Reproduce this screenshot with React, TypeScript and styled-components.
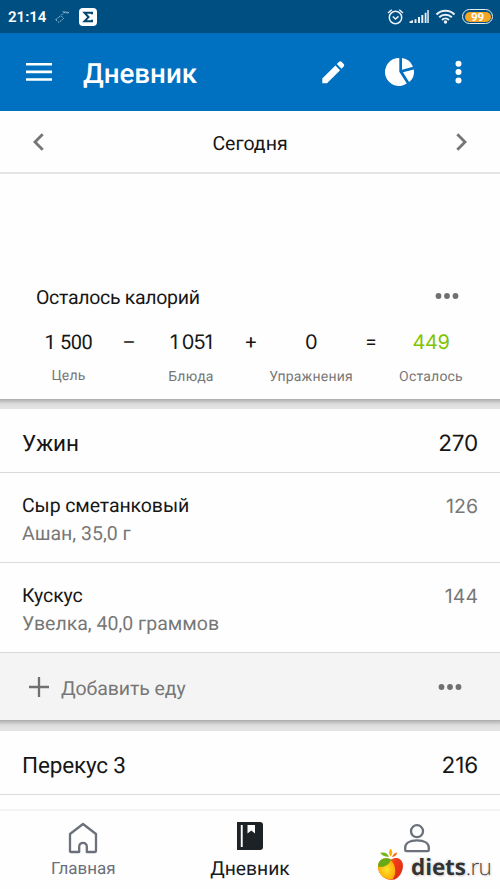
import React from "react";
import styled, { createGlobalStyle } from "styled-components";

const GlobalStyle = createGlobalStyle`
  * { box-sizing: border-box; }
  body { margin: 0; background: #fff; font-family: Roboto, "Noto Sans", sans-serif; text-rendering: geometricPrecision; }
  svg { display: block; flex: none; }
`;

const Screen = styled.div`
  width: 500px;
  height: 889px;
  overflow: hidden;
  display: flex;
  flex-direction: column;
  background: #fefefe;
  color: #161616;
`;

const StatusBar = styled.header`
  height: 33px;
  flex: none;
  display: flex;
  align-items: center;
  padding: 0 7px 0 8px;
  background: #004f82;
  color: #fff;
`;

const Clock = styled.span`
  width: 46px;
  font-size: 15px;
  font-weight: 600;
  line-height: 33px;
  padding-top: 1px;
`;

const Spacer = styled.div`
  flex: 1;
`;

const Battery = styled.div`
  width: 31px;
  height: 15px;
  margin-left: 6px;
  border: 1.5px solid #e6eef3;
  border-radius: 8px;
  padding: 1.5px;
  display: flex;
`;

const Charge = styled.span`
  flex: 1;
  border-radius: 5px;
  background: #f5a623;
  color: #fff;
  font: 700 11.5px/10px Roboto, sans-serif;
  text-align: center;
`;

const AppBar = styled.div`
  height: 78px;
  flex: none;
  display: flex;
  align-items: center;
  padding: 0 36px 0 26px;
  background: #0070c0;
  color: #fff;
`;

const Title = styled.h1`
  margin: 3px 0 0 31px;
  font-size: 27.7px;
  line-height: 32px;
  font-weight: 500;
`;

const DateBar = styled.div`
  height: 63px;
  flex: none;
  display: flex;
  align-items: center;
  justify-content: space-between;
  padding: 0 33px;
  border-bottom: 2px solid #e5e5e5;
  font-size: 19.5px;
`;

const DateLabel = styled.span`
  padding-top: 4px;
`;

const Summary = styled.section`
  height: 225px;
  flex: none;
  padding: 110px 0 0;
`;

const SummaryHead = styled.div`
  display: flex;
  justify-content: space-between;
  align-items: center;
  height: 26px;
  padding: 0 41px 0 36px;
  font-size: 19.5px;
  letter-spacing: -0.3px;

  svg { margin-top: -2px; }
`;

const Equation = styled.div`
  display: grid;
  grid-template-columns: 87px 34px 90px 30px 90px 30px 90px;
  padding: 19px 0 0 25px;
`;

const Term = styled.div`
  display: flex;
  flex-direction: column;
  align-items: center;
  white-space: nowrap;
`;

const Amount = styled.span<{ $plain?: boolean; $green?: boolean; $tight?: boolean }>`
  font: 400 20px/26px ${(p) => (p.$plain ? "Roboto" : "Inter")}, sans-serif;
  letter-spacing: ${(p) => (p.$tight ? "-0.9px" : "-0.4px")};
  color: ${(p) => (p.$green ? "#7fc400" : "#161616")};
`;

const Operator = styled.span`
  font-size: 20px;
  line-height: 26px;
  text-align: center;
`;

const Caption = styled.span<{ $raised?: boolean }>`
  margin-top: ${(p) => (p.$raised ? "12px" : "13px")};
  font-size: 14px;
  line-height: 18px;
  letter-spacing: 0.2px;
  color: #777;
`;

const Gap = styled.div<{ $height: number }>`
  height: ${(p) => p.$height}px;
  flex: none;
  background: linear-gradient(#aaa 0, #c0c0c0 2px, #dcdcdc 5px, #e3e3e3 8px);
`;

const MealHead = styled.div`
  height: 64px;
  flex: none;
  display: flex;
  align-items: center;
  justify-content: space-between;
  padding: 7px 22px 0;
  border-bottom: 1px solid #dadada;
  font-size: 22.5px;
  letter-spacing: -0.15px;
  line-height: 30px;
`;

const MealTotal = styled.span`
  font: 400 22.5px/30px Inter, sans-serif;
`;

const FoodRow = styled.div`
  height: 90px;
  flex: none;
  display: flex;
  justify-content: space-between;
  padding: 19px 22px 0 22px;
  border-bottom: 1px solid #dadada;
`;

const FoodName = styled.div`
  font-size: 19.5px;
  line-height: 28px;
  letter-spacing: -0.1px;
`;

const FoodDetail = styled.div`
  font-size: 19.5px;
  line-height: 28px;
  color: #777;
`;

const FoodCalories = styled.div`
  font: 400 19.5px/28px Inter, sans-serif;
  color: #777;
`;

const AddRow = styled.div`
  height: 67px;
  flex: none;
  display: flex;
  align-items: center;
  padding: 0 38px 0 29px;
  background: #f4f4f4;
  color: #777;
`;

const AddLabel = styled.span`
  margin-left: 12px;
  padding-top: 4px;
  font-size: 19.5px;
  letter-spacing: -0.1px;
`;

const DotsBox = styled.div`
  margin-left: auto;
`;

const Nav = styled.nav`
  height: 80px;
  margin-top: auto;
  flex: none;
  display: grid;
  grid-template-columns: 1fr 1fr 1fr;
  border-top: 2px solid #f3f3f3;
  background: #fefefe;
  position: relative;
`;

const NavItem = styled.div<{ $active?: boolean }>`
  display: flex;
  flex-direction: column;
  align-items: center;
  padding-top: 11px;
  color: ${(p) => (p.$active ? "#171b1f" : "#6b707a")};
  font-size: ${(p) => (p.$active ? "19.3px" : "17px")};
  line-height: 24px;
`;

const NavLabel = styled.span`
  margin-top: 1px;
`;

const Watermark = styled.div`
  position: absolute;
  left: 377px;
  top: 37px;
  display: flex;
  align-items: flex-start;
`;

const Brand = styled.span`
  margin: 5px 0 0 5px;
  font: 300 22.5px/28px "Open Sans", sans-serif;
  letter-spacing: -0.8px;
  color: #444;
  text-shadow: 0 0 2px #fff, 1px 1px 2px #ccc, -1px -1px 2px #e2e2e2;
  b { font-weight: 700; letter-spacing: -0.1px; color: #333; }
`;

const Dots = () => (
  <svg width="24" height="8" viewBox="0 0 24 8" fill="#707070">
    <circle cx="3.5" cy="4" r="2.9" /><circle cx="12" cy="4" r="2.9" /><circle cx="20.5" cy="4" r="2.9" />
  </svg>
);

const Chevron = ({ right }: { right?: boolean }) => (
  <svg width="11" height="18" viewBox="0 0 11 18" fill="none" stroke="#757575" strokeWidth="2.8">
    <path d={right ? "M1.3 1.3 9 9l-7.7 7.7" : "M9.7 1.3 2 9l7.7 7.7"} />
  </svg>
);

const StatusLeft = () => (
  <svg width="44" height="20" viewBox="0 0 44 20">
    <g stroke="#bdd4e2" strokeWidth=".8" fill="none" strokeDasharray="2 1">
      <path d="M1.5 12.5 5 15.5 9.5 11.5 7 8.5 10 5.5 15 6.2M10 5.5 9 4.5 15 5.5" />
      <path d="M2 12.5 7 8.5" />
    </g>
    <rect x="25" y="1" width="18" height="18" rx="4" fill="#fff" />
    <path d="M38 7.2V5.8h-7.5l4 4.3-4 4.1H38v-1.5" fill="none" stroke="#00466f" strokeWidth="2" />
  </svg>
);

const StatusRight = () => (
  <svg width="69" height="18" viewBox="0 0 69 18" fill="none" stroke="#e8f0f5" strokeWidth="1.5">
    <circle cx="8.5" cy="9.5" r="6.2" />
    <path d="M5.8 8.5 8.5 11l3-2.6M1 5l3.7-3.3M16 5l-3.7-3.3" />
    <g stroke="none" fill="#e8f0f5">
      <path d="M22.5 15v-1.5L26 12v3zM27.5 11.2h2V15h-2zM31 9h2v6h-2zM34.3 7h2v8h-2zM37.7 4.7h1.8V15h-1.8zM40.3 2h1.5v13h-1.5z" />
      <circle cx="58.5" cy="14" r="1.7" />
    </g>
    <g strokeWidth="2">
      <path d="M49.5 6.5c5-5 13-5 18 0M52.2 9.3c3.5-3.5 9-3.5 12.6 0M55 12c2-2 5-2 7 0" />
    </g>
  </svg>
);

const MenuIcon = () => (
  <svg width="26" height="20" viewBox="0 0 26 20" fill="#fff">
    <path d="M0 1h26v2.6H0zM0 8.6h26v2.6H0zM0 16.2h26v2.6H0z" />
  </svg>
);

const ActionIcons = () => (
  <svg width="142" height="30" viewBox="0 0 142 30" fill="#fff">
    <path d="M.3 26.3v-4.7L13.4 8.5l4.7 4.7L5 26.3zM14.8 7.1l2.1-2.1q1.4-1.4 2.8 0l2 2q1.3 1.3 0 2.6l-2.2 2.2z" />
    <path d="M77.3 1A14 14 0 1 0 84.8 26.6L77.3 14.8z" />
    <path d="M80 1A14 14 0 0 1 91 9.7L80 12.7z" />
    <path d="M91.9 12.4A14 14 0 0 1 87.1 25.1L81 15.2z" />
    <circle cx="136.5" cy="6.7" r="3" /><circle cx="136.5" cy="15" r="3" /><circle cx="136.5" cy="23.4" r="3" />
  </svg>
);

const PlusIcon = () => (
  <svg width="20" height="20" viewBox="0 0 20 20" stroke="#707070" strokeWidth="2.3">
    <path d="M0 10h20M10 0v20" />
  </svg>
);

const HomeIcon = () => (
  <svg width="30" height="34" viewBox="0 0 30 34" fill="none" stroke="#6b707a" strokeWidth="2.3" strokeLinejoin="round">
    <path d="M2 12 15 2l13 10V29q0 1-1 1h-8.2v-5.4a3.8 3.8 0 0 0-7.6 0V30H3q-1 0-1-1z" />
  </svg>
);

const BookIcon = () => (
  <svg width="26" height="34" viewBox="0 0 26 34">
    <path d="M0 0h23q3 0 3 3v22q0 3-3 3H0z" fill="#1c2226" />
    <path d="M3.8 3h1.9v22H3.8zM10.5 3h7.5v8.5l-3.7-3-3.8 3z" fill="#fefefe" />
  </svg>
);

const PersonIcon = () => (
  <svg width="26" height="34" viewBox="0 0 26 34" fill="none" stroke="#6b707a" strokeWidth="2.3">
    <circle cx="13" cy="9.2" r="6" />
    <path d="M1.2 28v-2.4c0-4.2 4.2-7.2 11.8-7.2s11.8 3 11.8 7.2V28q0 1.2-1.2 1.2H2.4Q1.2 29.2 1.2 28z" />
  </svg>
);

const AppleLogo = () => (
  <svg width="29" height="34" viewBox="0 0 29 34">
    <defs>
      <linearGradient id="skin" x1="0" x2="1" y1="0" y2="1">
        <stop offset="0" stopColor="#ff941f" /><stop offset=".45" stopColor="#ef391a" /><stop offset="1" stopColor="#d92a11" />
      </linearGradient>
      <radialGradient id="yellow" cx=".5" cy=".5" r=".6">
        <stop offset="0" stopColor="#ffe329" /><stop offset="1" stopColor="#ffa200" />
      </radialGradient>
    </defs>
    <path d="M14 11.6c4-3.2 10.6-2 11.8 4.1 1.3 7-4.4 16.4-10.6 16.1C8 32.6.7 26 1 18.3 1.2 11 8.5 8.5 14 11.6z" fill="url(#skin)" />
    <path d="M1 18c4 1 8-.5 12-6 5 2 7.5 13 2.8 19C9 33 .8 27 1 18z" fill="url(#yellow)" />
    <path d="M1 18.5c.5-8 7-10 13-6.9-2 6-8 8.5-13 6.9z" fill="#66aa16" />
    <path d="M12 8.7C8.5 9.2 5 7.5 3.3 4.7c4-.9 7.5.3 8.7 4z" fill="#79b518" />
    <path d="M13.5 8.4c-2-2.7-2-5.5.1-8 2.3 2.4 2.3 5.4-.1 8z" fill="#ffad00" />
    <path d="M15 9.2c1-3 2.8-4.2 5.2-4.6-.5 2.5-2 4.1-5.2 4.6z" fill="#f36b17" />
  </svg>
);

const foods = [
  { name: "Сыр сметанковый", detail: "Ашан, 35,0 г", calories: 126 },
  { name: "Кускус", detail: "Увелка, 40,0 граммов", calories: 144 },
];

export default function App() {
  return (
    <>
      <GlobalStyle />
      <Screen>
        <StatusBar>
          <Clock>21:14</Clock>
          <StatusLeft />
          <Spacer />
          <StatusRight />
          <Battery><Charge>99</Charge></Battery>
        </StatusBar>
        <AppBar>
          <MenuIcon />
          <Title>Дневник</Title>
          <Spacer />
          <ActionIcons />
        </AppBar>
        <DateBar>
          <Chevron />
          <DateLabel>Сегодня</DateLabel>
          <Chevron right />
        </DateBar>
        <Summary>
          <SummaryHead><span>Осталось калорий</span><Dots /></SummaryHead>
          <Equation>
            <Term><Amount $plain>1 500</Amount><Caption $raised>Цель</Caption></Term>
            <Operator>–</Operator>
            <Term><Amount $tight>1 051</Amount><Caption>Блюда</Caption></Term>
            <Operator>+</Operator>
            <Term><Amount>0</Amount><Caption>Упражнения</Caption></Term>
            <Operator>=</Operator>
            <Term><Amount $green>449</Amount><Caption>Осталось</Caption></Term>
          </Equation>
        </Summary>
        <Gap $height={10} />
        <MealHead><span>Ужин</span><MealTotal>270</MealTotal></MealHead>
        {foods.map((food) => (
          <FoodRow key={food.name}>
            <div><FoodName>{food.name}</FoodName><FoodDetail>{food.detail}</FoodDetail></div>
            <FoodCalories>{food.calories}</FoodCalories>
          </FoodRow>
        ))}
        <AddRow><PlusIcon /><AddLabel>Добавить еду</AddLabel><DotsBox><Dots /></DotsBox></AddRow>
        <Gap $height={11} />
        <MealHead><span>Перекус 3</span><MealTotal>216</MealTotal></MealHead>
        <Nav>
          <NavItem><HomeIcon /><NavLabel>Главная</NavLabel></NavItem>
          <NavItem $active><BookIcon /><NavLabel>Дневник</NavLabel></NavItem>
          <NavItem><PersonIcon /></NavItem>
          <Watermark><AppleLogo /><Brand><b>diets</b>.ru</Brand></Watermark>
        </Nav>
      </Screen>
    </>
  );
}
